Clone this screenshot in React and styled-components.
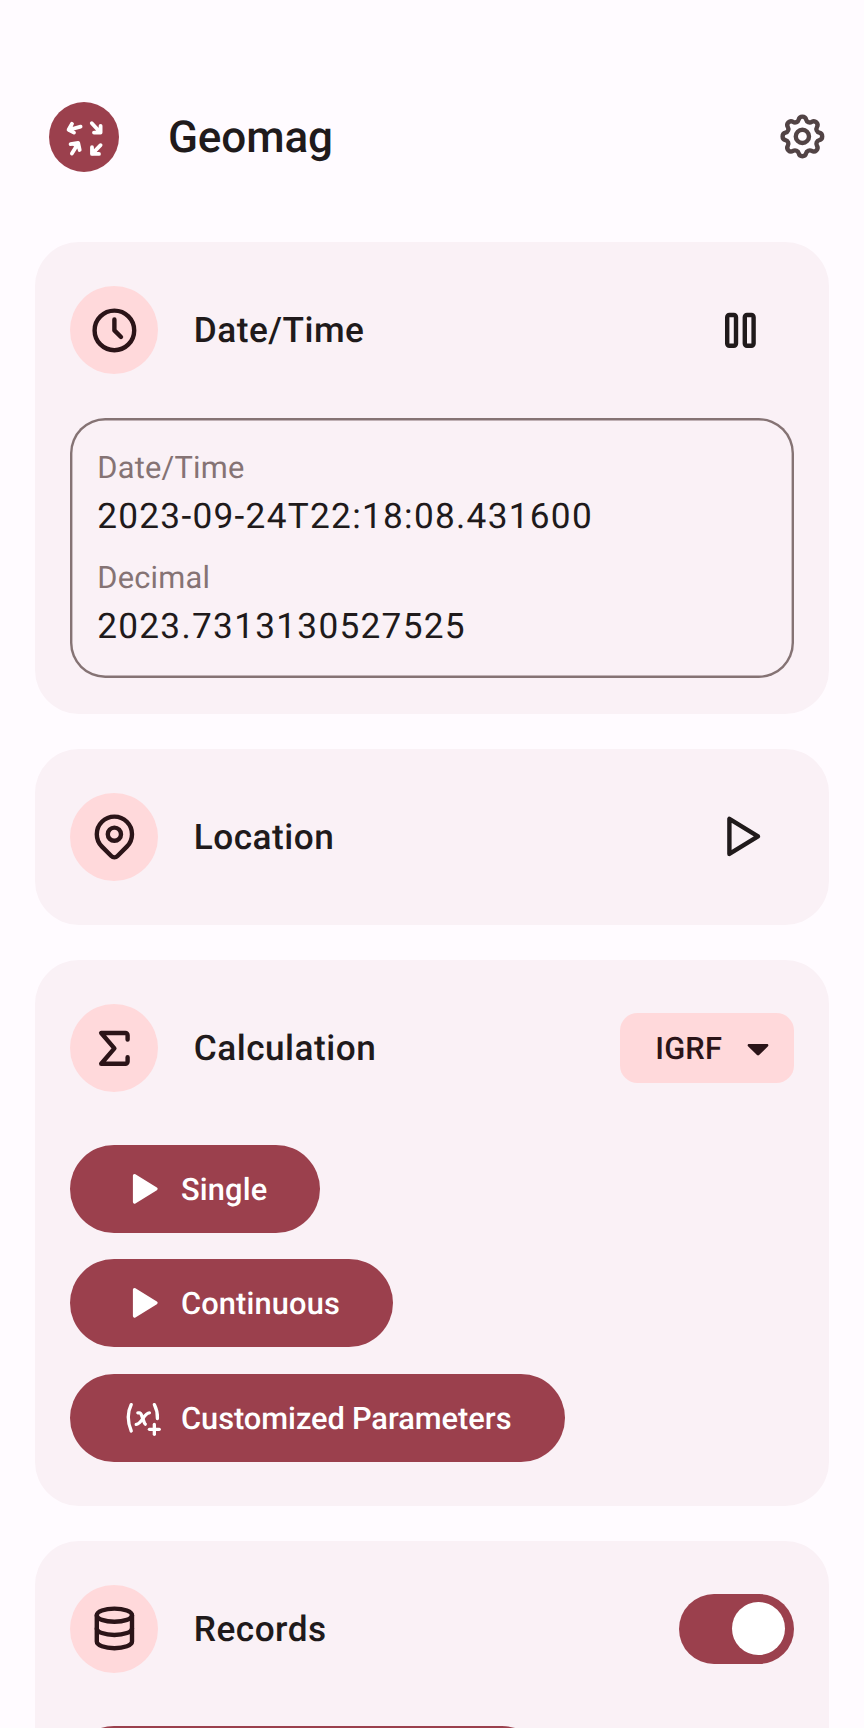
import React from 'react';
import styled, { createGlobalStyle } from 'styled-components';
import {
  TbClock,
  TbDatabase,
  TbMapPin,
  TbPlayerPause,
  TbPlayerPlay,
  TbPlayerPlayFilled,
  TbSettings,
  TbSum,
  TbVariablePlus,
} from 'react-icons/tb';

const color = {
  background: '#fffbff',
  surface: '#faf1f6',
  primary: '#9b404d',
  onPrimary: '#ffffff',
  container: '#ffd9db',
  onContainer: '#2b1418',
  text: '#201a1b',
  muted: '#857374',
  action: '#524345',
};

const GlobalStyle = createGlobalStyle`
  * { box-sizing: border-box; }
  html, body { height: 100%; overflow: hidden; }
  body {
    margin: 0;
    background: ${color.background};
    color: ${color.text};
    font-family: Roboto, "Liberation Sans", sans-serif;
    text-rendering: geometricPrecision;
  }
  svg { display: block; flex: none; }
  button { font: inherit; text-rendering: inherit; border: 0; margin: 0; padding: 0; background: none; color: inherit; }
`;

const Screen = styled.div`
  height: 1728px;
  overflow: hidden;
  padding: 101.6px 35.2px 0;
`;

const AppBar = styled.header`
  display: flex;
  align-items: center;
  height: 70.4px;
  padding-left: 13.4px;
  margin-bottom: 70.4px;
`;

const Logo = styled.div`
  width: 70.4px;
  height: 70.4px;
  border-radius: 50%;
  background: ${color.primary};
`;

const AppTitle = styled.h1`
  flex: 1;
  margin: 0 0 0 49px;
  padding-top: 2px;
  font-size: 44px;
  font-weight: 500;
  line-height: 61.6px;
  letter-spacing: -0.1px;
`;

const IconButton = styled.button`
  color: ${(p) => p.$color || color.text};
  margin-right: ${(p) => p.$inset || 0}px;
`;

const Cards = styled.main`
  display: flex;
  flex-direction: column;
  gap: 35.2px;
`;

const Card = styled.section`
  background: ${color.surface};
  border-radius: 44px;
  padding: 0 35.2px ${(p) => p.$bottom || 0}px;
`;

const CardHeader = styled.div`
  display: flex;
  align-items: center;
  height: 176px;
`;

const Badge = styled.div`
  display: flex;
  align-items: center;
  justify-content: center;
  width: 88px;
  height: 88px;
  border-radius: 50%;
  background: ${color.container};
  color: ${color.onContainer};
`;

const CardTitle = styled.h2`
  flex: 1;
  margin: 0 0 0 35.4px;
  padding-top: 1px;
  font-size: 35.2px;
  font-weight: 500;
  line-height: 52.8px;
  letter-spacing: 0.5px;
`;

const Readout = styled.dl`
  margin: 0;
  height: 260px;
  padding: 27.3px 26.4px 0 26.8px;
  box-shadow: inset 0 0 0 2.4px ${color.muted};
  border-radius: 35.2px;
  display: flex;
  flex-direction: column;
  gap: 13.4px;
`;

const Label = styled.dt`
  font-size: 30.8px;
  line-height: 44px;
  letter-spacing: 0.25px;
  color: ${color.muted};
`;

const Value = styled.dd`
  margin: 0;
  font-size: 35.2px;
  line-height: 52.8px;
  letter-spacing: 1.29px;
`;

const Actions = styled.div`
  display: flex;
  flex-direction: column;
  align-items: flex-start;
  gap: 26.4px;
  padding-top: 8.8px;
`;

const PillButton = styled.button`
  display: flex;
  align-items: center;
  gap: 18.2px;
  width: ${(p) => (p.$width ? `${p.$width}px` : 'auto')};
  height: 88px;
  padding: 0 53.2px 0 52.8px;
  border-radius: 44px;
  background: ${color.primary};
  color: ${color.onPrimary};
  font-size: 30.8px;
  font-weight: 500;
  line-height: 44px;
  letter-spacing: ${(p) => (p.$tight ? -0.03 : 0.15)}px;
  word-spacing: ${(p) => (p.$tight ? -0.6 : 0)}px;
  white-space: nowrap;
`;

const ButtonText = styled.span`
  padding-top: 2px;
`;

const ModelSelect = styled.button`
  display: flex;
  align-items: center;
  justify-content: space-between;
  width: 173.6px;
  height: 70.4px;
  padding: 0 24.4px 0 35.2px;
  border-radius: 17.6px;
  background: ${color.container};
  color: ${color.onContainer};
  font-size: 30.8px;
  font-weight: 500;
  line-height: 44px;
  letter-spacing: 0.22px;
`;

const Switch = styled.div`
  display: flex;
  align-items: center;
  justify-content: flex-end;
  width: 114.4px;
  height: 70.4px;
  padding: 8.8px;
  border-radius: 35.2px;
  background: ${color.primary};
`;

const Knob = styled.span`
  width: 52.8px;
  height: 52.8px;
  border-radius: 50%;
  background: ${color.onPrimary};
`;

const ICON = 52.8;
const SMALL_ICON = 39.6;

function ArrowsMark() {
  return (
    <svg width="70.4" height="70.4" viewBox="0 0 70.4 70.4" fill="#fff" stroke="#fff" strokeWidth="3.8" strokeLinecap="round" strokeLinejoin="round">
      <path d="M31.6 24.6 L20.5 27.8" />
      <path d="M23 21.8 L19.6 27.8 L25 30.6" />
      <path d="M42.8 21.2 L51 30" />
      <path d="M51.6 23.8 L51.6 30.6 L45 30.6" />
      <path d="M22.9 51.6 L28.8 42.1" />
      <path d="M21.6 42.2 L29.2 41 L30.7 48" />
      <path d="M51.6 43.2 L43.6 51.3" />
      <path d="M43 45.2 L43 51.9 L50 51.9" />
    </svg>
  );
}

function Caret() {
  return (
    <svg width="22" height="18" viewBox="0 0 22 18" fill="currentColor">
      <path d="M1.9 5h18.2c1.2 0 1.7 1.4.9 2.2l-8.9 8.9c-.6.6-1.5.6-2.1 0L1 7.2C.2 6.4.7 5 1.9 5z" />
    </svg>
  );
}

function Section({ icon: Icon, title, trailing, bottom, children }) {
  return (
    <Card $bottom={bottom}>
      <CardHeader>
        <Badge><Icon size={ICON} /></Badge>
        <CardTitle>{title}</CardTitle>
        {trailing}
      </CardHeader>
      {children}
    </Card>
  );
}

function Action({ icon: Icon, tight, children }) {
  return (
    <PillButton $tight={tight}>
      <Icon size={SMALL_ICON} />
      <ButtonText>{children}</ButtonText>
    </PillButton>
  );
}

export default function App() {
  return (
    <>
      <GlobalStyle />
      <Screen>
        <AppBar>
          <Logo><ArrowsMark /></Logo>
          <AppTitle>Geomag</AppTitle>
          <IconButton $color={color.action} aria-label="Settings"><TbSettings size={ICON} /></IconButton>
        </AppBar>
        <Cards>
          <Section
            icon={TbClock}
            title="Date/Time"
            bottom={35.2}
            trailing={<IconButton $inset={26.4} aria-label="Pause"><TbPlayerPause size={ICON} /></IconButton>}
          >
            <Readout>
              <div>
                <Label>Date/Time</Label>
                <Value>2023-09-24T22:18:08.431600</Value>
              </div>
              <div>
                <Label>Decimal</Label>
                <Value>2023.7313130527525</Value>
              </div>
            </Readout>
          </Section>
          <Section
            icon={TbMapPin}
            title="Location"
            trailing={<IconButton $inset={26.4} aria-label="Start"><TbPlayerPlay size={ICON} /></IconButton>}
          />
          <Section
            icon={TbSum}
            title="Calculation"
            bottom={44}
            trailing={<ModelSelect><ButtonText>IGRF</ButtonText><Caret /></ModelSelect>}
          >
            <Actions>
              <Action icon={TbPlayerPlayFilled}>Single</Action>
              <Action icon={TbPlayerPlayFilled}>Continuous</Action>
              <Action icon={TbVariablePlus} tight>Customized Parameters</Action>
            </Actions>
          </Section>
          <Section
            icon={TbDatabase}
            title="Records"
            bottom={44}
            trailing={<Switch role="switch" aria-checked="true"><Knob /></Switch>}
          >
            <Actions>
              <PillButton $width={475.5} />
            </Actions>
          </Section>
        </Cards>
      </Screen>
    </>
  );
}
